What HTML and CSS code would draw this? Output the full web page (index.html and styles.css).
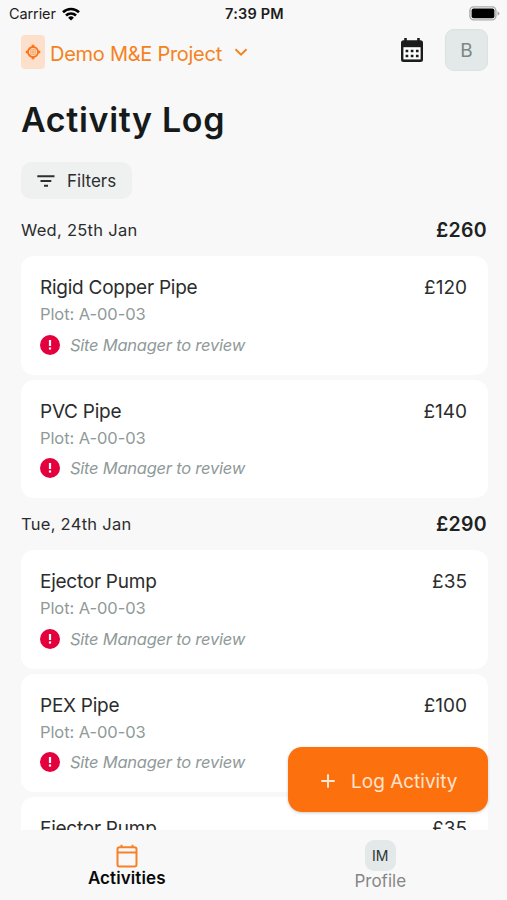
FILE: index.html
```html
<!DOCTYPE html>
<html lang="en">
<head>
<meta charset="utf-8">
<title>Activity Log</title>
<link rel="stylesheet" href="styles.css">
</head>
<body>
<svg width="0" height="0" class="defs" aria-hidden="true">
  <symbol id="alert" viewBox="0 0 20 20">
    <circle cx="10" cy="10" r="10" fill="#e4003c"/>
    <path d="M10 5v6" stroke="#fff" stroke-width="2.2"/>
    <path d="M10 12.4v2.2" stroke="#fff" stroke-width="2.2"/>
  </symbol>
</svg>
<div class="app">
  <div class="status">
    <div class="carrier"><span>Carrier</span>
      <svg width="18" height="14" viewBox="0 0 18 14" fill="none" stroke="#000" stroke-width="2.6"><path d="M1 5.2a11.6 11.6 0 0 1 16 0M4 8.5a7.2 7.2 0 0 1 10 0"/><path d="M9 13.6 6.1 10.7a4.1 4.1 0 0 1 5.8 0z" fill="#000" stroke="none"/></svg>
    </div>
    <div class="clock">7:39 PM</div>
    <svg class="battery" width="31" height="15" viewBox="0 0 31 15"><rect x=".9" y=".9" width="26" height="13" rx="3.8" fill="#f8f8f8" stroke="#aaa" stroke-width="1.4"/><rect x="2.6" y="2.6" width="22.8" height="9.6" rx="2" fill="#000"/><path d="M28.5 5.3q2 .7 2 2.2t-2 2.2z" fill="#aaa"/></svg>
  </div>
  <header class="header">
    <div class="badge"><svg width="16" height="16" viewBox="0 0 16 16" fill="none" stroke="#fb7518"><circle cx="8" cy="8" r="5" stroke-width="1.9"/><path d="M8 .8v2.400M8 12.800v2.400M.8 8h2.400M12.800 8h2.400" stroke-width="2.600"/><path d="M5.700 5.700h4.600v4.600H5.700zM8 5.700v4.600M5.700 8h4.600" stroke-width=".9" opacity=".55"/></svg></div>
    <span class="project">Demo M&amp;E Project</span>
    <svg class="chevron" width="14" height="9" viewBox="0 0 14 9" fill="none" stroke="#f58220" stroke-width="2"><path d="m1.5 1.2 5.5 5.4 5.5-5.4"/></svg>
    <svg class="calendar" width="24" height="26" viewBox="0 0 24 26"><path d="M4.2 1h2.6v2.3h10.4V1h2.6v2.3h.7a2.5 2.5 0 0 1 2.5 2.5v16.7a2.5 2.5 0 0 1-2.5 2.5h-17A2.5 2.5 0 0 1 1 22.500V5.800a2.500 2.500 0 0 1 2.500-2.500h.7z" fill="#1b1d1d"/><path d="M3.400 10.200h17.200v12.200H3.400z" fill="#fff"/><path d="M5.600 14h13M5.600 18.900h13" stroke="#1b1d1d" stroke-width="2.500" stroke-dasharray="2.700 2.450"/></svg>
    <div class="avatar">B</div>
  </header>
  <h1 class="title">Activity Log</h1>
  <button class="filters"><svg width="18" height="12" viewBox="0 0 18 12" stroke="#2b3030" stroke-width="2"><path d="M.3 1.300h17.200M3.500 6h10.800M7 10.700h4"/></svg><span>Filters</span></button>
  <main class="list">
    <section class="group">
      <div class="day"><span>Wed, 25th Jan</span><strong>£260</strong></div>
      <article class="card">
        <div class="row"><span class="name">Rigid Copper Pipe</span><span>£120</span></div>
        <div class="plot">Plot: A-00-03</div>
        <div class="note"><svg width="20" height="20"><use href="#alert"/></svg><em>Site Manager to review</em></div>
      </article>
      <article class="card">
        <div class="row"><span class="name">PVC Pipe</span><span>£140</span></div>
        <div class="plot">Plot: A-00-03</div>
        <div class="note"><svg width="20" height="20"><use href="#alert"/></svg><em>Site Manager to review</em></div>
      </article>
    </section>
    <section class="group">
      <div class="day"><span>Tue, 24th Jan</span><strong>£290</strong></div>
      <article class="card">
        <div class="row"><span class="name">Ejector Pump</span><span>£35</span></div>
        <div class="plot">Plot: A-00-03</div>
        <div class="note"><svg width="20" height="20"><use href="#alert"/></svg><em>Site Manager to review</em></div>
      </article>
      <article class="card">
        <div class="row"><span class="name">PEX Pipe</span><span>£100</span></div>
        <div class="plot">Plot: A-00-03</div>
        <div class="note"><svg width="20" height="20"><use href="#alert"/></svg><em>Site Manager to review</em></div>
      </article>
      <article class="card">
        <div class="row"><span class="name">Ejector Pump</span><span>£35</span></div>
      </article>
    </section>
  </main>
  <button class="log"><svg width="14" height="14" viewBox="0 0 14 14" stroke="#ffe9d8" stroke-width="1.900"><path d="M7 .3v13.400M.3 7h13.400"/></svg><span>Log Activity</span></button>
  <nav class="tabs">
    <div class="tab active"><svg width="22" height="24" viewBox="0 0 22 24" fill="none" stroke="#f58229" stroke-width="2"><rect x="1.500" y="3.200" width="19" height="19.300" rx="2"/><path d="M1.500 8.500h19M5.500 .8v2.400M16.500 .8v2.400"/></svg><span>Activities</span></div>
    <div class="tab"><div class="initials">IM</div><span>Profile</span></div>
  </nav>
</div>
</body>
</html>
```
FILE: styles.css
```css
* { box-sizing: border-box; }
body { margin: 0; background: #f8f8f8; font-family: Inter, "Liberation Sans", sans-serif; color: #2b2d2d; }
button { border: 0; font: inherit; color: inherit; }
svg { display: block; flex: none; }
.defs { position: absolute; }
.app { position: relative; width: 507px; height: 900px; display: flex; flex-direction: column; overflow: hidden; white-space: nowrap; }
.status { height: 27px; display: grid; grid-template-columns: 1fr auto 1fr; align-items: center; padding: 0 7px 0 9px; font-size: 14.500px; color: #1c1c1c; }
.carrier { display: flex; align-items: center; gap: 6px; letter-spacing: -.1px; }
.clock { font-weight: 600; font-size: 14.500px; letter-spacing: .2px; }
.battery { justify-self: end; }
.header { height: 44px; margin-top: 1px; display: flex; align-items: center; padding: 0 19px 0 21px; color: #f58220; }
.badge { width: 24px; height: 34px; margin-top: 4px; border-radius: 4px; background: #fde0cc; display: flex; align-items: center; justify-content: center; }
.project { margin: 7px 0 0 5px; font-size: 20px; line-height: 26px; letter-spacing: -.27px; }
.chevron { margin: 5px 0 0 12px; }
.calendar { margin-left: auto; }
.avatar { width: 43px; height: 42px; margin-left: 21px; border-radius: 9px; background: #e3e8e8; border: 1px solid #dde1e1; color: #7b8686; font-size: 19px; display: flex; align-items: center; justify-content: center; }
.title { margin: 24px 0 0 21px; font-size: 34px; line-height: 48px; font-weight: 600; letter-spacing: .65px; color: #171a1a; }
.filters { align-self: flex-start; width: 111px; height: 37px; margin: 18px 0 0 21px; padding: 0 0 0 16px; border-radius: 10px; background: #eff1f1; display: flex; align-items: center; gap: 12px; font-size: 17px; }
.list { flex: 1; min-height: 0; overflow: hidden; padding: 5px 19px 0 21px; }
.group { display: flex; flex-direction: column; gap: 5px; }
.day { height: 47px; padding: 4px 1px 0 0; display: flex; align-items: center; justify-content: space-between; font-size: 16.500px; letter-spacing: .28px; }
.day strong { font-size: 19.500px; font-weight: 600; letter-spacing: .3px; color: #202222; }
.card { height: 118.500px; flex: none; padding: 19px 21px 0 19px; border-radius: 13px; background: #fff; }
.row { display: flex; justify-content: space-between; font-size: 19px; line-height: 26px; }
.name { letter-spacing: -.25px; }
.plot { font-size: 16.500px; line-height: 26px; letter-spacing: -.08px; color: #8f9a99; }
.note { display: flex; align-items: center; gap: 10px; margin-top: 4.500px; height: 26px; font-size: 16.500px; letter-spacing: -.24px; color: #8f9a99; }
.log { position: absolute; left: 288px; top: 747px; width: 200px; height: 65px; padding: 2px 0 0 33px; border-radius: 14px; background: #fd700e; color: #ffe3cd; display: flex; align-items: center; gap: 16px; font-size: 19px; box-shadow: 0 1px 3px #0003; }
.log span { margin-top: 2px; }
.tabs { height: 70px; background: #f8f8f8; display: grid; grid-template-columns: 1fr 1fr; }
.tab { display: flex; flex-direction: column; align-items: center; font-size: 17px; line-height: 20px; color: #858787; }
.active { color: #090909; font-weight: 600; letter-spacing: .1px; }
.initials { width: 31px; height: 31px; margin-top: 10px; border-radius: 9px; background: #e3e8e8; color: #2f3333; font-size: 14px; line-height: 31px; text-align: center; }
.active svg { margin-top: 14px; }
```
